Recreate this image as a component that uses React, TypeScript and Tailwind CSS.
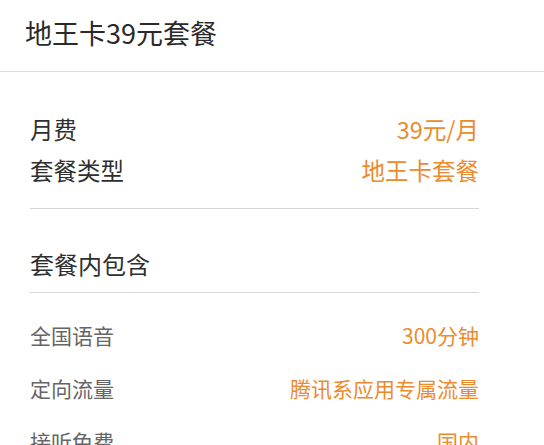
import React from 'react';

const font = { fontFamily: '"Noto Sans CJK SC", "Noto Sans", sans-serif' };

const summary = [
  { label: '月费', value: '39元/月' },
  { label: '套餐类型', value: '地王卡套餐' },
];

const items = [
  { label: '全国语音', value: '300分钟' },
  { label: '定向流量', value: '腾讯系应用专属流量' },
  { label: '接听免费', value: '国内' },
];

export default function App() {
  return (
    <div className="w-[544px] h-[445px] overflow-hidden bg-white" style={font}>
      <div className="h-[72px] px-[25px] flex items-center pb-[6px] border-b border-[#dcdcdc]">
        <h1 className="text-[27px] leading-[30px] text-[#2a2a2a]">地王卡39元套餐</h1>
      </div>

      <div className="ml-[30px] w-[449px]">
        <div className="pt-[36px] pb-[18px] border-b border-[#d6d6d6]">
          {summary.map((row) => (
            <div key={row.label} className="h-[41px] flex items-center justify-between text-[23.5px] leading-[30px]">
              <span className="text-[#2f2f2f]">{row.label}</span>
              <span className="text-[#ec8b2e]">{row.value}</span>
            </div>
          ))}
        </div>

        <div className="pt-[40px] pb-[13px] border-b border-[#d6d6d6]">
          <div className="text-[24px] leading-[30px] text-[#2f2f2f]">套餐内包含</div>
        </div>

        <div className="pt-[15px]">
          {items.map((row) => (
            <div key={row.label} className="h-[53px] flex items-center justify-between text-[21px] leading-[28px]">
              <span className="text-[#666666]">{row.label}</span>
              <span className="text-[#ec8b2e]">{row.value}</span>
            </div>
          ))}
        </div>
      </div>
    </div>
  );
}
